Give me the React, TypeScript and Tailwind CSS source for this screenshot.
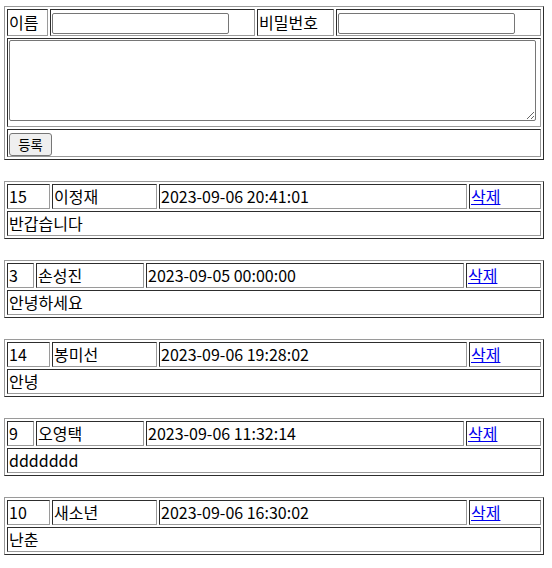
import React from "react";

const entries = [
  { num: "15", name: "이정재", date: "2023-09-06 20:41:01", content: "반갑습니다" },
  { num: "3", name: "손성진", date: "2023-09-05 00:00:00", content: "안녕하세요" },
  { num: "14", name: "봉미선", date: "2023-09-06 19:28:02", content: "안녕" },
  { num: "9", name: "오영택", date: "2023-09-06 11:32:14", content: "ddddddd" },
  { num: "10", name: "새소년", date: "2023-09-06 16:30:02", content: "난춘" },
];

const tableCls =
  "w-[540px] table-fixed border-separate border-spacing-[2px] border border-t-[#9a9a9a] border-l-[#9a9a9a] border-r-[#2d2d2d] border-b-[#2d2d2d]";
const cellCls =
  "p-[1px] align-middle border border-t-[#2d2d2d] border-l-[#2d2d2d] border-r-[#9a9a9a] border-b-[#9a9a9a]";

function Entry({ num, name, date, content }: (typeof entries)[number]) {
  // one-digit numbers give the first column less room
  const short = num.length === 1;
  return (
    <table className={`${tableCls} mt-[21px]`}>
      <colgroup>
        <col className={short ? "w-[27px]" : "w-[43px]"} />
        <col className={short ? "w-[108px]" : "w-[105px]"} />
        <col className={short ? "w-[318px]" : "w-[308px]"} />
        <col className={short ? "w-[75px]" : "w-[72px]"} />
      </colgroup>
      <tbody>
        <tr>
          <td className={cellCls}>
            <div className="h-[21px] leading-[21px] whitespace-nowrap">{num}</div>
          </td>
          <td className={cellCls}>
            <div className="h-[21px] leading-[21px] whitespace-nowrap">{name}</div>
          </td>
          <td className={cellCls}>
            <div className="h-[21px] leading-[21px] whitespace-nowrap">{date}</div>
          </td>
          <td className={cellCls}>
            <div className="h-[21px] leading-[21px] whitespace-nowrap">
              <a href="#" className="text-[#0000ee] underline">
                삭제
              </a>
            </div>
          </td>
        </tr>
        <tr>
          <td colSpan={4} className={cellCls}>
            <div className="h-[21px] leading-[21px] whitespace-nowrap">{content}</div>
          </td>
        </tr>
      </tbody>
    </table>
  );
}

export default function App() {
  return (
    <div className="min-h-[568px] bg-white pl-[4px] pt-[6px] text-[16px] text-black font-['Noto_Sans_CJK_KR',sans-serif]">
      <table className={tableCls}>
        <colgroup>
          <col className="w-[41px]" />
          <col className="w-[205px]" />
          <col className="w-[77px]" />
          <col className="w-[205px]" />
        </colgroup>
        <tbody>
          <tr>
            <td className={cellCls}>
              <div className="flex h-[23px] items-center whitespace-nowrap leading-[21px]">이름</div>
            </td>
            <td className={cellCls}>
              <div className="flex h-[23px] items-end">
                <input
                  type="text"
                  className="h-[21px] w-[177px] rounded-[2px] border border-[#767676] bg-white px-[2px] text-[13.33px]"
                />
              </div>
            </td>
            <td className={cellCls}>
              <div className="flex h-[23px] items-center whitespace-nowrap leading-[21px]">비밀번호</div>
            </td>
            <td className={cellCls}>
              <div className="flex h-[23px] items-end">
                <input
                  type="password"
                  className="h-[21px] w-[177px] rounded-[2px] border border-[#767676] bg-white px-[2px] text-[13.33px]"
                />
              </div>
            </td>
          </tr>
          <tr>
            <td colSpan={4} className={cellCls}>
              <div className="h-[85px]">
                <textarea className="block h-[81px] w-[527px] resize rounded-[2px] border border-[#767676] bg-white p-[2px] text-[13.33px]" />
              </div>
            </td>
          </tr>
          <tr>
            <td colSpan={4} className={cellCls}>
              <div className="h-[24px]">
                <button
                  type="button"
                  className="h-[23px] w-[43px] rounded-[3px] border border-[#767676] bg-[#efefef] text-[13.33px] leading-[21px] text-black"
                >
                  등록
                </button>
              </div>
            </td>
          </tr>
        </tbody>
      </table>
      {entries.map((e) => (
        <Entry key={e.num} {...e} />
      ))}
    </div>
  );
}
